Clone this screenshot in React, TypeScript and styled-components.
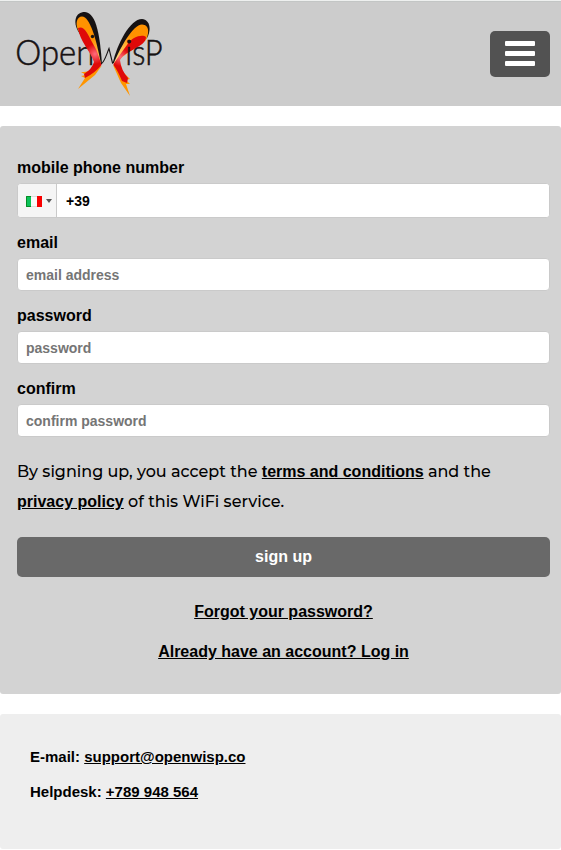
import React from "react";
import styled, { createGlobalStyle } from "styled-components";

const GlobalStyle = createGlobalStyle`
  * { box-sizing: border-box; }
  body {
    margin: 0;
    background: #fff;
    color: #000;
    font-family: "Liberation Sans", Arial, sans-serif;
    font-size: 16px;
    font-weight: 700;
  }
`;

const Page = styled.div`
  display: flex;
  flex-direction: column;
  gap: 20px;
  height: 850px;
  overflow: hidden;
`;

const Header = styled.header`
  display: flex;
  justify-content: space-between;
  align-items: flex-start;
  height: 106px;
  padding: 10px 11px 0 17px;
  background: #ccc;
  border-top: 1px solid #eef0ef;
  box-shadow: inset 0 1px 0 #c3c6c5;
`;

const LogoArt = styled.svg`
  display: block;
  width: 147px;
  height: 86px;
  overflow: visible;
`;

const MenuButton = styled.button`
  display: flex;
  flex-direction: column;
  justify-content: center;
  align-items: center;
  gap: 5px;
  width: 60px;
  height: 46px;
  margin-top: 20px;
  padding: 0 0 1px;
  border: 0;
  border-radius: 5px;
  background: #525252;
`;

const MenuBar = styled.span`
  width: 30px;
  height: 5px;
  border-radius: 1px;
  background: #fff;
`;

const Form = styled.form`
  display: flex;
  flex-direction: column;
  height: 568px;
  padding: 32px 11px 0 17px;
  border-radius: 3px;
  background: #d3d3d3;
`;

const Field = styled.div`
  display: flex;
  flex-direction: column;
  margin-bottom: 15px;
`;

const Label = styled.label`
  height: 25px;
  line-height: 19px;
`;

const Input = styled.input`
  width: 100%;
  height: 33px;
  padding: 0 8px;
  border: 1px solid #cacaca;
  border-radius: 4px;
  background: #fff;
  color: #000;
  font: 700 14px "Liberation Sans", Arial, sans-serif;
  outline: none;
  &::placeholder { color: #757575; opacity: 1; }
`;

const PhoneBox = styled.div`
  display: flex;
  height: 35px;
  border: 1px solid #cacaca;
  border-radius: 4px;
  background: #fff;
  overflow: hidden;
`;

const Country = styled.div`
  display: flex;
  align-items: center;
  gap: 4px;
  flex: 0 0 39px;
  padding: 2px 0 0 8px;
  border-right: 1px solid #cacaca;
  background: #f5f5f5;
`;

const Flag = styled.svg`
  display: block;
  width: 16px;
  height: 11px;
`;

const Caret = styled.span`
  margin-top: -2px;
  border: 3px solid transparent;
  border-top: 4px solid #555;
  border-bottom: 0;
`;

const PhoneInput = styled(Input)`
  height: 33px;
  padding-left: 9px;
  border: 0;
  border-radius: 0;
`;

const Terms = styled.p`
  margin: 5px 0 20px;
  font: 500 16px/30px Montserrat, Inter, sans-serif;
  white-space: nowrap;
`;

const Link = styled.a`
  color: #000;
  font-family: "Liberation Sans", Arial, sans-serif;
  font-weight: 700;
  text-decoration: underline;
`;

const Submit = styled.button`
  height: 40px;
  border: 0;
  border-radius: 5px;
  padding: 0;
  background: #696969;
  color: #fff;
  font: 700 16px "Liberation Sans", Arial, sans-serif;
`;

const Links = styled.nav`
  display: flex;
  flex-direction: column;
  align-items: center;
  gap: 20px;
  margin-top: 25px;
  line-height: 20px;
`;

const Footer = styled.footer`
  display: flex;
  flex-direction: column;
  height: 135px;
  padding: 25px 30px 0;
  border-radius: 3px;
  background: #eee;
  font-size: 15px;
  line-height: 35px;
`;

function Logo() {
  return (
    <LogoArt viewBox="17 11 147 86" role="img" aria-label="OpenWisp">
      <defs>
        <linearGradient id="leftGlow" x1="80" y1="25" x2="101" y2="65" gradientUnits="userSpaceOnUse">
          <stop offset=".4" stopColor="#ff9200" />
          <stop offset="1" stopColor="#ffdb80" />
        </linearGradient>
        <linearGradient id="rightGlow" x1="145" y1="25" x2="115" y2="63" gradientUnits="userSpaceOnUse">
          <stop offset=".35" stopColor="#ff9200" />
          <stop offset=".95" stopColor="#ffe08a" />
        </linearGradient>
        <radialGradient id="leftRed" cx="95" cy="54" r="10" gradientUnits="userSpaceOnUse">
          <stop stopColor="#ff6c7c" />
          <stop offset="1" stopColor="#df0909" />
        </radialGradient>
        <radialGradient id="rightRed" cx="120" cy="57" r="9" gradientUnits="userSpaceOnUse">
          <stop stopColor="#ff6c7c" />
          <stop offset="1" stopColor="#df0909" />
        </radialGradient>
      </defs>
      <g fill="#161213" fontFamily="Lato, sans-serif" fontWeight="300" fontSize="36" stroke="#161213" strokeWidth=".55">
        <text x="15.3" y="65" textLength="79" lengthAdjust="spacingAndGlyphs">Open</text>
      </g>
      <path d="M101 64C104 63 106 56 109 48.5L112.5 63C116 62 118 53 123 48" fill="none" stroke="#161213" strokeWidth="1.1" />
      <path d="M78 31C73 22 75 12 85 12C97 13 100 38 102 64L99 65Z" fill="#161213" />
      <path d="M78 30C75 23 77 16.5 82 16.5C90 17 96 38 101 64L98 65Z" fill="url(#leftGlow)" />
      <path d="M97 67C92 70 88 72 81 72L86 75L81 76L85 78L78 89L95 75L101.5 66Z" fill="#ff9500" />
      <path d="M78 28C84 25 88 34 92 42Q97 50 99 57L101.5 65Q95 73 85 78L84 74Q92 69 94 62C90 50 80 42 78 28Z" fill="url(#leftRed)" />
      <circle cx="92.5" cy="36.5" r="1.7" fill="#161213" />
      <path d="M112.5 64C117 44 130 19 142 19C151 20 151 31 147 38Z" fill="#161213" />
      <path d="M113.5 64C121 46 133 25 142 24.5C150 25 149 34 146 40L121 58Z" fill="url(#rightGlow)" />
      <path d="M113 65L120 69L130 79L126 80L130 84L126 84L130 96L121 83Z" fill="#ff9500" />
      <path d="M113.5 64Q121 53 127 45C132 36 143 34 146 37C146 47 126 50 120 60Q121 70 128 78L127 83L122 81Q118 71 113.5 65Z" fill="url(#rightRed)" />
      <circle cx="129.5" cy="41.5" r="1.7" fill="#161213" />
      <g fill="#161213" fontFamily="Lato, sans-serif" fontWeight="300" fontSize="36" stroke="#161213" strokeWidth=".55">
        <text x="125.3" y="65" textLength="37.3" lengthAdjust="spacingAndGlyphs">isP</text>
      </g>
    </LogoArt>
  );
}

function ItalianFlag() {
  return (
    <Flag viewBox="0 0 16 11" aria-label="Italy">
      <path fill="#fafafa" d="M0 0h16v11H0z" />
      <path fill="#0bc25a" d="M0 0h5v11H0z" />
      <path fill="#f90000" d="M11 0h5v11h-5z" />
      <path d="M5 .5H.5v10H5" fill="none" stroke="#078c24" />
      <path d="M5 .5h6M5 10.5h6" stroke="#ddd" />
    </Flag>
  );
}

const fields = [
  { id: "email", label: "email", placeholder: "email address", type: "email" },
  { id: "password", label: "password", placeholder: "password", type: "password" },
  { id: "confirm", label: "confirm", placeholder: "confirm password", type: "password" },
];

export default function App() {
  return (
    <>
      <GlobalStyle />
      <Page>
        <Header>
          <Logo />
          <MenuButton type="button" aria-label="Menu">
            <MenuBar />
            <MenuBar />
            <MenuBar />
          </MenuButton>
        </Header>
        <Form>
          <Field>
            <Label htmlFor="phone">mobile phone number</Label>
            <PhoneBox>
              <Country>
                <ItalianFlag />
                <Caret />
              </Country>
              <PhoneInput id="phone" type="tel" defaultValue="+39" />
            </PhoneBox>
          </Field>
          {fields.map((f) => (
            <Field key={f.id}>
              <Label htmlFor={f.id}>{f.label}</Label>
              <Input id={f.id} type={f.type} placeholder={f.placeholder} />
            </Field>
          ))}
          <Terms>
            By signing up, you accept the <Link>terms and conditions</Link> and the
            <br />
            <Link>privacy policy</Link> of this WiFi service.
          </Terms>
          <Submit type="button">sign up</Submit>
          <Links>
            <Link>Forgot your password?</Link>
            <Link>Already have an account? Log in</Link>
          </Links>
        </Form>
        <Footer>
          <div>E-mail: <Link>support@openwisp.co</Link></div>
          <div>Helpdesk: <Link>+789 948 564</Link></div>
        </Footer>
      </Page>
    </>
  );
}
